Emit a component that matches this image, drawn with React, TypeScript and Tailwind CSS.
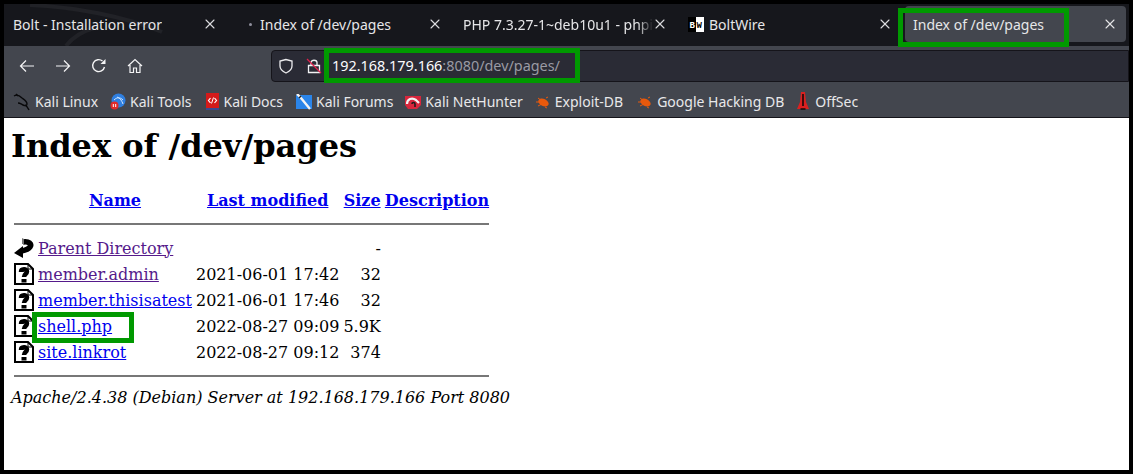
import React from 'react';
import { X } from 'lucide-react';

const tabs = [
  { title: 'Bolt - Installation error', width: 'w-[224px]', pl: 'pl-[9px]' },
  { title: 'Index of /dev/pages', width: 'w-[225px]', pl: 'pl-[32px]', dot: true },
  { title: 'PHP 7.3.27-1~deb10u1 - phpinfo()', width: 'w-[225px]', pl: 'pl-[10px]', fade: true },
  { title: 'BoltWire', width: 'w-[225px]', pl: 'pl-[10px]', favicon: true },
];

const fileRows = [
  { name: 'Parent Directory', date: '', size: '-', visited: true, parent: true },
  { name: 'member.admin', date: '2021-06-01 17:42', size: '32', visited: true },
  { name: 'member.thisisatest', date: '2021-06-01 17:46', size: '32' },
  { name: 'shell.php', date: '2022-08-27 09:09', size: '5.9K' },
  { name: 'site.linkrot', date: '2022-08-27 09:12', size: '374' },
];

function BoltWireIcon() {
  return (
    <svg width="16" height="15" viewBox="0 0 16 15" className="shrink-0">
      <rect width="8" height="15" fill="#000" />
      <rect x="8" width="8" height="15" fill="#fff" />
      <text x="1.5" y="11" fontSize="9" fontWeight="700" fill="#fff" fontFamily="Liberation Mono">B</text>
      <text x="8.5" y="11" fontSize="9" fontWeight="700" fill="#000" fontFamily="Liberation Mono">W</text>
    </svg>
  );
}

function KaliDragon() {
  return (
    <svg width="18" height="18" viewBox="0 0 18 18" fill="none" stroke="#08080a" strokeWidth="1.4" className="-ml-[2px]">
      <path d="M1 3c3-2 6 0 8 2 3 2 5 3 5 6 0 2-2 2-4 1-2-1-3-2-5-2M12 12c2 1 3 3 4 5" />
      <path d="M3 1l2 2" />
    </svg>
  );
}

function KaliToolsIcon() {
  return (
    <svg width="16" height="17" viewBox="0 0 16 17">
      <circle cx="8.5" cy="7.5" r="7" fill="#2f7fe0" />
      <path d="M4 7c3-3 6-3 9 0M7 4c3 1 5 4 6 7" stroke="#cfe6ff" strokeWidth="1" fill="none" />
      <circle cx="4.5" cy="12.5" r="4" fill="#e02b2b" />
      <path d="M3.3 11v3M5.7 11v3" stroke="#fff" strokeWidth="1" />
    </svg>
  );
}

function KaliDocsIcon() {
  return (
    <svg width="16" height="17" viewBox="0 0 16 17">
      <rect x="2" width="13" height="15" fill="#d41a1a" />
      <rect x="2" y="15" width="13" height="2" fill="#3a4a90" />
      <path d="M6.5 5L4.5 7.5 6.5 10M10.5 5l2 2.5-2 2.5" stroke="#fff" strokeWidth="1.2" fill="none" />
      <path d="M9.5 4.5L7.5 10.5" stroke="#fff" strokeWidth="1" />
    </svg>
  );
}

function KaliForumsIcon() {
  return (
    <svg width="16" height="16" viewBox="0 0 16 16">
      <rect y="1" width="16" height="14" fill="#2a85ea" />
      <path d="M1 0l4 4 9 11" stroke="#f4f4f4" strokeWidth="2.4" fill="none" />
      <path d="M3 4l2-2" stroke="#222" strokeWidth="1.4" />
    </svg>
  );
}

function NetHunterIcon() {
  return (
    <svg width="16" height="16" viewBox="0 0 16 16">
      <path d="M0 2h16v9l-4 4H3L0 11z" fill="#d8263c" />
      <path d="M2 10c0-5 5-7 9-4l3 3" stroke="#f2f2f2" strokeWidth="2.2" fill="none" />
      <path d="M7 10c0-2 3-2 3 0v3" stroke="#1d1d1d" strokeWidth="1.6" fill="none" />
    </svg>
  );
}

function BugIcon() {
  return (
    <svg width="16" height="14" viewBox="0 0 16 14">
      <ellipse cx="8.5" cy="7.5" rx="5.5" ry="3.5" fill="#e8590c" transform="rotate(25 8.5 7.5)" />
      <path d="M1 7l5 0M3 3l4 3M3 11l4-2M11 3l2-1M10 12l2 1" stroke="#e8590c" strokeWidth="1" />
    </svg>
  );
}

function OffSecIcon() {
  return (
    <svg width="16" height="19" viewBox="0 0 16 19">
      <path d="M6 0h4l1 10 3 7H2l3-7z" fill="#d92020" />
      <path d="M8 2v12M5.5 17h5" stroke="#1a0808" strokeWidth="1.6" />
    </svg>
  );
}

const bookmarks = [
  { label: 'Kali Linux', icon: <KaliDragon />, gap: 'ml-0' },
  { label: 'Kali Tools', icon: <KaliToolsIcon />, gap: 'ml-[12px]' },
  { label: 'Kali Docs', icon: <KaliDocsIcon />, gap: 'ml-[12px]' },
  { label: 'Kali Forums', icon: <KaliForumsIcon />, gap: 'ml-[13px]' },
  { label: 'Kali NetHunter', icon: <NetHunterIcon />, gap: 'ml-[12px]' },
  { label: 'Exploit-DB', icon: <BugIcon />, gap: 'ml-[12px]' },
  { label: 'Google Hacking DB', icon: <BugIcon />, gap: 'ml-[14px]' },
  { label: 'OffSec', icon: <OffSecIcon />, gap: 'ml-[11px]' },
];

function ToolbarIcon({ children }: { children: React.ReactNode }) {
  return (
    <svg width="16" height="16" viewBox="0 0 16 16" fill="none" stroke="#f4f4f5" strokeWidth="1.2" className="shrink-0">
      {children}
    </svg>
  );
}

function FileIcon({ parent }: { parent?: boolean }) {
  if (parent) {
    return (
      <svg width="20" height="22" viewBox="0 0 20 22" className="block">
        <path d="M9 5C15 4 18 7 16 10 14 13 10 13.500 7 14" fill="none" stroke="#000" strokeWidth="5.500" />
        <path d="M9 9L0 16l9 5z" fill="#000" />
        <path d="M8 1l2 1v5L8 7z" fill="#777" />
      </svg>
    );
  }
  return (
    <svg width="20" height="22" viewBox="0 0 20 22" className="block">
      <path d="M1 1h13l5 5v15H1z" fill="#fff" stroke="#000" strokeWidth="2" />
      <path d="M14 1v5h5" fill="none" stroke="#000" strokeWidth="1" />
      <path d="M7 9c0-3.500 6-3.500 6-.5 0 2.500-3 2.500-3 5.500" fill="none" stroke="#000" strokeWidth="4.500" />
      <rect x="7.500" y="16" width="5" height="3.500" fill="#000" />
    </svg>
  );
}

export default function App() {
  return (
    <div className="relative flex h-[474px] w-[1133px] flex-col overflow-hidden border-[4px] border-black bg-white">
      {/* Tab strip */}
      <div className="relative flex h-[42px] shrink-0 bg-[#16171c] font-['Noto_Sans',sans-serif] text-[14px] text-[#e6e6e8]">
        <svg width="240" height="42" viewBox="0 0 240 42" fill="none" stroke="#212227" strokeWidth="4" className="absolute left-0 top-0">
          <path d="M26 1C70 3 120 12 158 28" />
          <path d="M62 42C68 34 76 28 90 24" />
        </svg>
        {tabs.map((tab) => (
          <div key={tab.title} className={`relative flex h-full shrink-0 items-center pb-[2px] ${tab.width} ${tab.pl}`}>
            {tab.dot && <span className="absolute left-[21px] top-[19px] h-[3px] w-[3px] rounded-full bg-[#8f8f9d]" />}
            {tab.favicon && <span className="mr-[5px]"><BoltWireIcon /></span>}
            <span className={`overflow-hidden whitespace-nowrap ${tab.fade ? "w-[190px] [mask-image:linear-gradient(to_right,black_92%,transparent)]" : ''}`}>{tab.title}</span>
            <X size={16} strokeWidth={1.6} className="absolute right-[10px] top-[12px] text-[#dcdcdf]" />
          </div>
        ))}
        <div className="relative ml-[2px] mt-[2px] flex h-[36px] w-[221px] items-center self-start rounded-[4px] bg-[#43464e] pl-[8px]">
          <span className="whitespace-nowrap">Index of /dev/pages</span>
          <X size={16} strokeWidth={1.6} className="absolute right-[8px] top-[10px] text-[#e6e6e8]" />
        </div>
      </div>

      {/* Toolbar */}
      <div className="flex h-[40px] shrink-0 items-center bg-[#43464e] font-['Noto_Sans',sans-serif]">
        <div className="flex items-center gap-[20px] pl-[15px]">
          <ToolbarIcon><path d="M15 8H1.500M7 2.500L1.500 8 7 13.500" /></ToolbarIcon>
          <ToolbarIcon><path d="M1 8h13.500M9 2.500L14.500 8 9 13.500" /></ToolbarIcon>
          <ToolbarIcon>
            <path d="M13.500 9A6 6 0 1 1 11.500 3" strokeWidth="1.4" />
            <path d="M14.500 1v5h-5z" fill="#f4f4f5" stroke="none" />
          </ToolbarIcon>
          <ToolbarIcon>
            <path d="M1 8l7-6.500L15 8M3 7v7.500h3.500V10h3v4.500H13V7" />
          </ToolbarIcon>
        </div>
        <div className="ml-[128px] flex h-[32px] flex-1 items-center rounded-l-[4px] border border-[#15141a] bg-[#2a2b35] pl-[6px] text-[14.4px]">
          <svg width="16" height="16" viewBox="0 0 16 16" fill="none" stroke="#ececee" strokeWidth="1.3" className="shrink-0">
            <path d="M8 1.500L2 3v5c0 3 2.500 5.500 6 7 3.500-1.500 6-4 6-7V3z" />
          </svg>
          <svg width="16" height="16" viewBox="0 0 16 16" fill="none" strokeWidth="1.3" className="ml-[12px] shrink-0">
            <path d="M5 7V4.500C5 1.500 11 1.500 11 4.500V7M2.500 7.500h11v7h-11z" stroke="#f2f2f4" />
            <path d="M1 1l14 14" stroke="#e0204c" />
          </svg>
          <span className="ml-[10px] whitespace-nowrap text-[#fbfbfe]">
            192.168.179.166<span className="text-[#9a9aa4]">:8080/dev/pages/</span>
          </span>
        </div>
      </div>

      {/* Bookmarks */}
      <div className="flex h-[31px] shrink-0 items-center bg-[#43464e] pl-[11px] font-['Noto_Sans',sans-serif] text-[14px] text-[#e8e8ea]">
        {bookmarks.map((bookmark) => (
          <div key={bookmark.label} className={`flex items-center whitespace-nowrap ${bookmark.gap}`}>
            <span className="mr-[4px] flex w-4 justify-center">{bookmark.icon}</span>
            <span>{bookmark.label}</span>
          </div>
        ))}
      </div>

      {/* Page */}
      <div className="flex-1 border-t border-[#15141a] pl-[7px] pt-[8px] font-['DejaVu_Serif',serif] text-[16px] leading-[19px] text-black">
        <h1 className="mb-[23px] mt-[1px] text-[32px] leading-[38px] font-bold">Index of /dev/pages</h1>
        <table className="border-separate border-spacing-[2px]">
          <thead>
            <tr>
              <th className="p-px" />
              <th className="p-px font-bold"><a href="#" className="text-[#0000ee] underline">Name</a></th>
              <th className="p-px font-bold"><a href="#" className="text-[#0000ee] underline">Last modified</a></th>
              <th className="p-px font-bold"><a href="#" className="text-[#0000ee] underline">Size</a></th>
              <th className="p-px font-bold"><a href="#" className="text-[#0000ee] underline">Description</a></th>
            </tr>
            <tr>
              <th colSpan={5} className="p-px"><hr className="mb-2 mt-[9px] border-t-2 border-[#777]" /></th>
            </tr>
          </thead>
          <tbody>
            {fileRows.map((row) => (
              <tr key={row.name}>
                <td className="p-px align-top"><FileIcon parent={row.parent} /></td>
                <td className="p-px"><a href="#" className={`underline ${row.visited ? 'text-[#551a8b]' : 'text-[#0000ee]'}`}>{row.name}</a></td>
                <td className="whitespace-nowrap p-px text-left">{row.date}</td>
                <td className="p-px text-right">{row.size}</td>
                <td className="p-px" />
              </tr>
            ))}
            <tr>
              <th colSpan={5} className="p-px"><hr className="my-2 border-t-2 border-[#777]" /></th>
            </tr>
          </tbody>
        </table>
        <address className="italic">Apache/2.4.38 (Debian) Server at 192.168.179.166 Port 8080</address>
      </div>

      {/* Annotation boxes */}
      <div className="absolute left-[320px] top-[44px] h-[35px] w-[256px] border-[5px] border-[#009900]" />
      <div className="absolute left-[894px] top-[4px] h-[39px] w-[171px] border-[5px] border-[#009900]" />
      <div className="absolute left-[28px] top-[308px] h-[31px] w-[102px] border-[5px] border-[#009900]" />
    </div>
  );
}
